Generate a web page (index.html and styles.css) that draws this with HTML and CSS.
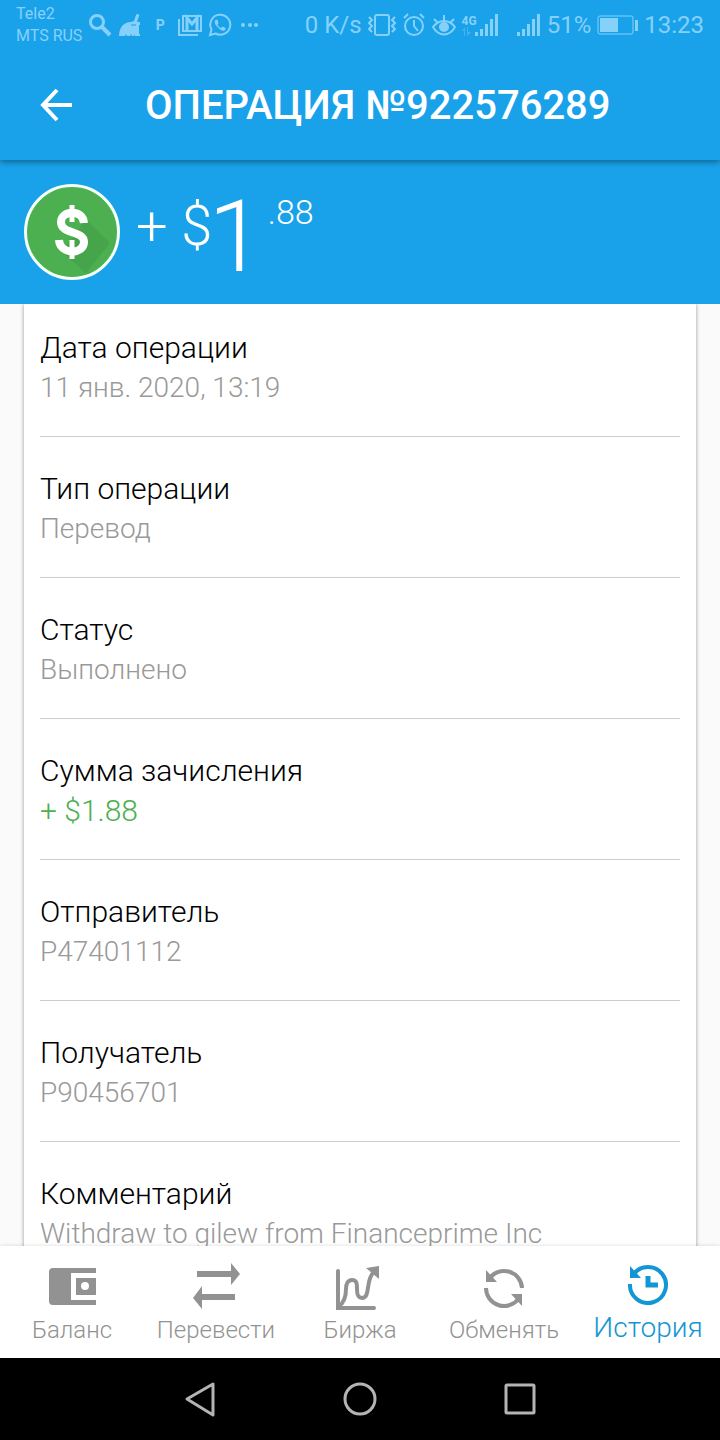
FILE: index.html
```
<!DOCTYPE html>
<html lang="ru">

<head>
    <meta charset="UTF-8">
    <meta name="viewport" content="width=device-width, initial-scale=1.0">
    <title>Операция №922576289</title>
    <link rel="stylesheet" href="styles.css">
</head>

<body>
    <!-- Status bar -->
    <div class="status_bar">
        <div class="carriers">
            <span>Tele2</span>
            <span>MTS RUS</span>
        </div>
        <div class="notifications">
            <svg width="24" height="24" viewBox="0 0 24 24" fill="none" stroke="currentColor">
                <circle cx="9" cy="9" r="6.5" stroke-width="3" />
                <path d="M14 14l8 8" stroke-width="4" />
            </svg>
            <svg width="24" height="24" viewBox="0 0 24 24" fill="currentColor">
                <path d="M1 23c0-4 1-7 3-10 2-2 5-4 9-4l3-1 2-6c1-2 4-1 3 1l-2 6h3v3h-1v9h1v2h-5v-2l-1 2h-2l-1-2-1 2H9l-1-2-1 2z" />
                <path d="M13 12h5" stroke="#19a2ea" />
            </svg>
            <b class="p_icon">P</b>
            <svg width="24" height="24" viewBox="0 0 24 24" fill="none" stroke="currentColor" stroke-width="2">
                <path d="M1 6v16h19" />
                <path d="M5 3h18v15H5z" />
                <path d="M9 18V5l5 6 5-6v13" stroke-width="3" />
            </svg>
            <svg width="24" height="24" viewBox="0 0 24 24">
                <path d="M2 22l1.5-5.500a10 10 0 1 1 4 4z" fill="none" stroke="currentColor" stroke-width="2" />
                <path d="M8 6.500c-3 3 0 6 2.500 8.500s5 4 7 1.500v-1.500l-3-1.500-1.500 1.500c-1.500-.5-3-2-3.500-3.500l1-1.500-1-3z" fill="currentColor" />
            </svg>
            <svg width="20" height="24" viewBox="0 0 20 24" fill="currentColor">
                <circle cx="5" cy="12" r="2" />
                <circle cx="12" cy="12" r="2" />
                <circle cx="18" cy="12" r="2" />
            </svg>
        </div>
        <div class="indicators">
            <span>0 K/s</span>
            <svg width="28" height="24" viewBox="0 0 28 24" fill="none" stroke="currentColor" stroke-width="2">
                <rect x="7" y="2" width="14" height="20" rx="2" />
                <path d="M1 4l3 3-3 3 3 3-3 3 3 3M27 4l-3 3 3 3-3 3 3 3-3 3" />
            </svg>
            <svg width="24" height="24" viewBox="0 0 24 24" fill="none" stroke="currentColor" stroke-width="2">
                <circle cx="12" cy="13" r="9" />
                <path d="M12 7v6l4 5M2 5l4-4M22 5l-4-4" />
            </svg>
            <svg width="24" height="24" viewBox="0 0 24 24" fill="none" stroke="currentColor" stroke-width="2">
                <path d="M1 14c6-8 16-8 22 0-6 10-16 10-22 0zM2 6l4 4M12 2v6M22 6l-4 4" />
                <circle cx="12" cy="14" r="4" fill="currentColor" />
            </svg>
            <div class="mobile_data">
                <b>4G</b>
                <svg width="10" height="9" viewBox="0 0 10 9" fill="currentColor" opacity="0.4">
                    <path d="M0 4l3-4v9H2V4zM5 9V0h1v5h3z" />
                </svg>
            </div>
            <svg class="signal" width="24" height="24" viewBox="0 0 24 24" fill="currentColor">
                <path d="M0 19h3v4H0zM5 16h3v7H5zM10 11h3v12h-3zM15 6h3v17h-3zM20 1h3v22h-3z" />
            </svg>
            <svg class="signal_second" width="24" height="24" viewBox="0 0 24 24" fill="currentColor">
                <path d="M0 19h3v4H0zM5 16h3v7H5zM10 11h3v12h-3zM15 6h3v17h-3zM20 1h3v22h-3z" />
            </svg>
            <span>51%</span>
            <svg width="41" height="24" viewBox="0 0 41 24" fill="currentColor">
                <rect x="1" y="3" width="35" height="18" rx="2" fill="none" stroke="currentColor" />
                <path d="M3 5h18v14H3zM38 7h3v11h-3z" />
            </svg>
            <time>13:23</time>
        </div>
    </div>

    <!-- Header -->
    <header class="header">
        <button type="button" class="back" aria-label="Назад">
            <svg width="34" height="34" viewBox="0 0 34 34" fill="none" stroke="currentColor" stroke-width="4">
                <path d="M33 17H4M18 2L4 17l14 15" />
            </svg>
        </button>
        <h1>ОПЕРАЦИЯ №922576289</h1>
    </header>

    <!-- Amount -->
    <section class="amount">
        <svg width="96" height="96" viewBox="0 0 96 96">
            <circle cx="48" cy="48" r="46" fill="#4caf50" />
            <path d="M62 35l24 24-24 30-24-21z" fill="#46a54a" />
            <circle cx="48" cy="48" r="46.5" fill="none" stroke="#f4fffa" stroke-width="3" />
            <path d="M60 39c-1-14-23-13-23-1 0 13 23 8 23 20 0 13-24 13-25-2" fill="none" stroke="#fff" stroke-width="8" />
            <path d="M48 21v17M48 56v19" stroke="#fff" stroke-width="5" />
        </svg>
        <span class="currency">+ $</span>
        <span class="whole">1</span>
        <span class="cents">.88</span>
    </section>

    <!-- Operation details -->
    <main class="content">
        <dl class="card">
            <div class="item">
                <dt>Дата операции</dt>
                <dd>11 янв. 2020, 13:19</dd>
            </div>
            <div class="item">
                <dt>Тип операции</dt>
                <dd>Перевод</dd>
            </div>
            <div class="item">
                <dt>Статус</dt>
                <dd>Выполнено</dd>
            </div>
            <div class="item">
                <dt>Сумма зачисления</dt>
                <dd class="income">+ $1.88</dd>
            </div>
            <div class="item">
                <dt>Отправитель</dt>
                <dd>P47401112</dd>
            </div>
            <div class="item">
                <dt>Получатель</dt>
                <dd>P90456701</dd>
            </div>
            <div class="item">
                <dt>Комментарий</dt>
                <dd>Withdraw to gilew from Financeprime Inc</dd>
            </div>
        </dl>
    </main>

    <!-- Bottom menu -->
    <nav class="menu">
        <a href="#">
            <svg width="48" height="48" viewBox="0 0 48 48" fill="currentColor">
                <path d="M5 6h43v5H23v27h25v5H5a4 4 0 0 1-4-4V10a4 4 0 0 1 4-4z" />
                <path fill-rule="evenodd" d="M28 16h20v17H28zM37 20a4 4 0 1 0 0 8 4 4 0 0 0 0-8z" />
            </svg>
            Баланс
        </a>
        <a href="#">
            <svg width="48" height="48" viewBox="0 0 48 48" fill="currentColor">
                <path d="M5 9h34V1l9 11-9 11v-8H5zM43 38H10v9L1 36l9-12v8h33z" />
            </svg>
            Перевести
        </a>
        <a href="#">
            <svg width="48" height="48" viewBox="0 0 48 48" fill="none" stroke="currentColor" stroke-width="4" stroke-linecap="round">
                <path d="M2 9v37h36" />
                <path d="M3 44c6-4 7-10 7-17 0-5 2-9 6-9 5 0 5 4 5 9 0 6 1 9 5 9 9 0 3-19 12-26" />
                <path d="M30 6l13-2v13z" fill="currentColor" stroke="none" />
            </svg>
            Биржа
        </a>
        <a href="#">
            <svg width="48" height="48" viewBox="0 0 48 48" fill="none" stroke="currentColor" stroke-width="4">
                <path d="M9 17a18 18 0 0 1 33 9M6 26a18 18 0 0 0 33 10" />
                <path d="M6 8v12h11zM42 44V32H31z" fill="currentColor" stroke="none" />
            </svg>
            Обменять
        </a>
        <a href="#" class="active">
            <svg width="48" height="48" viewBox="0 0 48 48" fill="none" stroke="currentColor" stroke-width="4">
                <path d="M9 15a18 18 0 1 1-3 9" />
                <path d="M6 6v12h11z" fill="currentColor" stroke="none" />
                <path d="M24 16v9h10" stroke-width="5" />
            </svg>
            История
        </a>
    </nav>

    <!-- System buttons -->
    <div class="system_bar">
        <button type="button" aria-label="Назад">
            <svg width="36" height="36" viewBox="0 0 36 36">
                <path d="M31 3v31L5 18z" />
            </svg>
        </button>
        <button type="button" aria-label="Домой">
            <svg width="36" height="36" viewBox="0 0 36 36">
                <circle cx="18" cy="18" r="15" />
            </svg>
        </button>
        <button type="button" aria-label="Недавние">
            <svg width="36" height="36" viewBox="0 0 36 36">
                <rect x="4" y="4" width="28" height="28" rx="1" />
            </svg>
        </button>
    </div>
</body>

</html>
```
FILE: styles.css
```
* {
    box-sizing: border-box;
}

body {
    display: flex;
    flex-direction: column;
    height: 100vh;
    margin: 0;
    overflow: hidden;
    font-family: Roboto, "Liberation Sans", sans-serif;
    font-weight: 300;
    background-color: #fafafa;
}

button {
    display: flex;
    padding: 0;
    border: none;
    background: none;
    color: inherit;
    cursor: pointer;
}

svg {
    display: block;
    flex: none;
}

/* Status bar */
.status_bar {
    display: flex;
    align-items: center;
    padding: 0 16px;
    height: 50px;
    flex: none;
    background-color: #19a2ea;
    color: #86d1fa;
    font-weight: 400;
    white-space: nowrap;
    z-index: 2;
}

.carriers {
    display: flex;
    flex-direction: column;
    font-size: 16px;
    line-height: 22px;
}

.notifications {
    display: flex;
    align-items: center;
    gap: 6px;
    margin-left: 6px;
}

.p_icon {
    width: 24px;
    font-size: 14px;
    text-align: center;
}

.indicators {
    display: flex;
    align-items: center;
    gap: 6px;
    margin-left: auto;
    font-size: 24px;
}

.mobile_data {
    font-size: 12px;
    line-height: 12px;
}

.signal {
    margin-left: -8px;
}

.signal_second {
    margin-left: 12px;
}

/* Header with the operation number */
.header {
    display: flex;
    align-items: center;
    height: 110px;
    flex: none;
    padding: 0 39px;
    gap: 72px;
    background-color: #19a2ea;
    color: #fff;
    box-shadow: 0 2px 6px rgba(0, 0, 0, 0.4);
    z-index: 1;
}

.header h1 {
    margin: 0;
    font-size: 40px;
    font-weight: 500;
}

/* Amount */
.amount {
    display: flex;
    align-items: flex-start;
    height: 144px;
    flex: none;
    padding: 24px;
    background-color: #19a2ea;
    color: #fff;
}

.currency {
    margin-left: 16px;
    font-size: 56px;
    line-height: 84px;
}

.whole {
    margin-left: -4px;
    font-size: 100px;
    line-height: 106px;
}

.cents {
    margin-left: 4px;
    font-size: 34px;
    line-height: 56px;
}

/* Card with details */
.content {
    flex: 1;
    min-height: 0;
    overflow-y: auto;
    scrollbar-width: none;
    padding: 0 24px;
}

.card {
    display: flex;
    flex-direction: column;
    gap: 32px;
    margin: 0;
    padding: 24px 16px;
    background-color: #fff;
    box-shadow: 0 0 4px rgba(0, 0, 0, 0.4);
}

.item {
    padding-bottom: 28px;
    border-bottom: 1px solid #ccc;
    line-height: 40px;
}

.item dt {
    font-size: 30px;
    color: #000;
}

.item dd {
    margin: 0;
    font-size: 28px;
    color: #999;
}

.item .income {
    font-size: 30px;
    color: #4caf50;
}

/* Bottom menu */
.menu {
    display: grid;
    grid-template-columns: repeat(5, 1fr);
    height: 112px;
    flex: none;
    background-color: #fff;
    box-shadow: 0 0 4px rgba(0, 0, 0, 0.15);
    z-index: 1;
}

.menu a {
    display: flex;
    flex-direction: column;
    align-items: center;
    padding-top: 16px;
    font-size: 24px;
    line-height: 40px;
    color: #929292;
    text-decoration: none;
}

.menu .active {
    padding-top: 14px;
    font-size: 28px;
    color: #1296d4;
}

/* System buttons */
.system_bar {
    display: flex;
    justify-content: center;
    align-items: center;
    gap: 124px;
    height: 82px;
    flex: none;
    background-color: #000;
    color: #b4b4b4;
}

.system_bar svg {
    fill: none;
    stroke: currentColor;
    stroke-width: 3;
    stroke-linejoin: round;
}
```
